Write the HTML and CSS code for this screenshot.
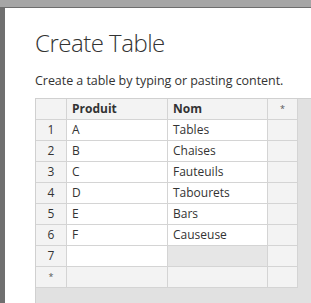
FILE: index.html
```html
<!DOCTYPE html>
<html lang="fr">
<head>
    <meta charset="UTF-8">
    <title>Create Table</title>
    <link rel="stylesheet" href="styles.css">
</head>
<body>
    <div class="topbar"></div>
    <div class="main">
        <div class="side"></div>
        <div class="dialog">
            <h1>Create Table</h1>
            <p class="intro">Create a table by typing or pasting content.</p>

            <div class="grid-wrap">
                <div class="grid">
                    <div class="cell head"></div>
                    <div class="cell head col-title">Produit</div>
                    <div class="cell head col-title">Nom</div>
                    <div class="cell head star">*</div>

                    <div class="cell num">1</div>
                    <div class="cell">A</div>
                    <div class="cell">Tables</div>
                    <div class="cell extra"></div>

                    <div class="cell num">2</div>
                    <div class="cell">B</div>
                    <div class="cell">Chaises</div>
                    <div class="cell extra"></div>

                    <div class="cell num">3</div>
                    <div class="cell">C</div>
                    <div class="cell">Fauteuils</div>
                    <div class="cell extra"></div>

                    <div class="cell num">4</div>
                    <div class="cell">D</div>
                    <div class="cell">Tabourets</div>
                    <div class="cell extra"></div>

                    <div class="cell num">5</div>
                    <div class="cell">E</div>
                    <div class="cell">Bars</div>
                    <div class="cell extra"></div>

                    <div class="cell num">6</div>
                    <div class="cell">F</div>
                    <div class="cell">Causeuse</div>
                    <div class="cell extra"></div>

                    <div class="cell num">7</div>
                    <div class="cell"></div>
                    <div class="cell selected"></div>
                    <div class="cell extra"></div>

                    <div class="cell num star">*</div>
                    <div class="cell extra"></div>
                    <div class="cell extra"></div>
                    <div class="cell extra"></div>
                </div>
            </div>
        </div>
    </div>
</body>
</html>
```

FILE: styles.css
```css
* {
    margin: 0;
    padding: 0;
    box-sizing: border-box;
}

html, body {
    height: 100%;
    overflow: hidden;
}

body {
    display: flex;
    flex-direction: column;
    background: #fff;
    font-family: "Open Sans", "Noto Sans", sans-serif;
    color: #333;
}

.topbar {
    height: 8px;
    background: #a6a6a6;
    border-bottom: 1px solid #6e6e6e;
    flex-shrink: 0;
}

.main {
    flex: 1;
    display: flex;
}

.side {
    width: 5px;
    background: #707070;
}

.dialog {
    flex: 1;
    display: flex;
    flex-direction: column;
    padding-left: 30px;
    background: #fff;
}

h1 {
    font-size: 24px;
    font-weight: 300;
    line-height: 32px;
    margin-top: 19px;
    color: #333;
    letter-spacing: -0.5px;
}

.intro {
    font-size: 12.5px;
    line-height: 16px;
    margin-top: 14px;
    color: #333;
    letter-spacing: -0.05px;
}

.grid-wrap {
    flex: 1;
    margin-top: 9px;
    background: #e1e1e1;
    border-top: 1px solid #d0d0d0;
    border-left: 1px solid #d0d0d0;
}

.grid {
    display: grid;
    grid-template-columns: 30px 100px 99px 29px;
    grid-auto-rows: 20px;
    gap: 1px;
    width: fit-content;
    background: #d4d4d4;
    padding: 0 1px 1px 0;
}

.cell {
    background: #fff;
    font-size: 12px;
    line-height: 20px;
    padding-left: 5px;
    white-space: nowrap;
}

.head {
    background: #f3f3f3;
}

.col-title {
    font-weight: bold;
}

.num {
    background: #f3f3f3;
    text-align: center;
    padding-left: 0;
}

.extra {
    background: #f3f3f3;
}

.selected {
    background: #e6e6e6;
}

.star {
    font-size: 9px;
    text-align: center;
    padding-left: 0;
    color: #555;
}
```
